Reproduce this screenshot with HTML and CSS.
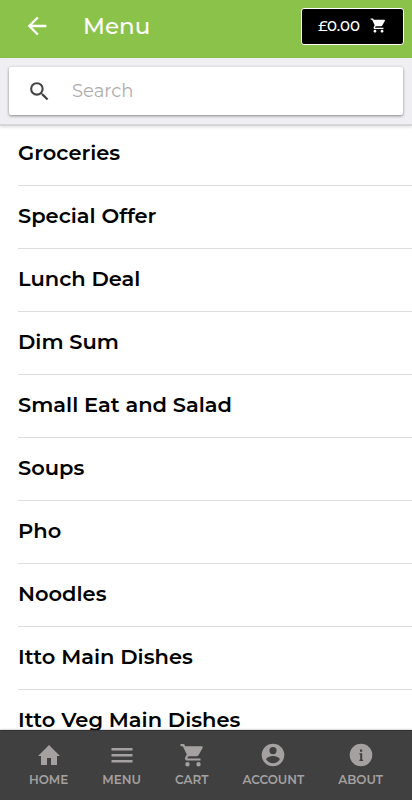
FILE: index.html
```html
<!DOCTYPE html>
<html lang="en">
<head>
    <meta charset="UTF-8">
    <meta name="viewport" content="width=device-width, initial-scale=1.0">
    <title>Menu</title>
    <link rel="stylesheet" href="styles.css">
</head>
<body>
    <header class="header">
        <button type="button" class="back" aria-label="Back">
            <svg viewBox="0 0 24 24"><path d="M20 11H7.83l5.59-5.59L12 4l-8 8 8 8 1.41-1.41L7.83 13H20v-2z"/></svg>
        </button>
        <h1 class="title">Menu</h1>
        <button type="button" class="basket">
            <span>£0.00</span>
            <svg viewBox="0 0 24 24"><path d="M7 18c-1.1 0-1.99.9-1.99 2S5.9 22 7 22s2-.9 2-2-.9-2-2-2zM1 2v2h2l3.6 7.59-1.35 2.45c-.16.28-.25.61-.25.96 0 1.1.9 2 2 2h12v-2H7.42c-.14 0-.25-.11-.25-.25l.03-.12.9-1.63h7.45c.75 0 1.41-.41 1.75-1.03l3.58-6.49A1 1 0 0 0 20 4H5.21l-.94-2H1zm16 16c-1.1 0-1.99.9-1.99 2s.89 2 1.99 2 2-.9 2-2-.9-2-2-2z"/></svg>
        </button>
    </header>

    <form class="search-bar" role="search">
        <label class="search">
            <svg viewBox="0 0 24 24"><path d="M15.5 14h-.79l-.28-.27A6.47 6.47 0 0 0 16 9.5 6.5 6.5 0 1 0 9.5 16c1.61 0 3.09-.59 4.23-1.57l.27.28v.79l5 4.99L20.49 19l-4.99-5zm-6 0a4.5 4.5 0 1 1 0-9 4.5 4.5 0 0 1 0 9z"/></svg>
            <input type="search" class="search-input" placeholder="Search" aria-label="Search">
        </label>
    </form>

    <main class="content">
        <ul class="categories">
            <li><a href="#">Groceries</a></li>
            <li><a href="#">Special Offer</a></li>
            <li><a href="#">Lunch Deal</a></li>
            <li><a href="#">Dim Sum</a></li>
            <li><a href="#">Small Eat and Salad</a></li>
            <li><a href="#">Soups</a></li>
            <li><a href="#">Pho</a></li>
            <li><a href="#">Noodles</a></li>
            <li><a href="#">Itto Main Dishes</a></li>
            <li><a href="#">Itto Veg Main Dishes</a></li>
        </ul>
    </main>

    <nav class="tabs">
        <a href="#" class="tab">
            <svg viewBox="0 0 24 24"><path d="M10 22v-7h4v7h6v-9h3L12 2 1 13h3v9z"/></svg>
            <span>HOME</span>
        </a>
        <a href="#" class="tab">
            <svg viewBox="0 0 24 24"><path d="M1.500 19.500h21V17h-21v2.500zm0-6h21V11h-21v2.500zm0-8.500v2.500h21V5h-21z"/></svg>
            <span>MENU</span>
        </a>
        <a href="#" class="tab">
            <svg viewBox="0 0 24 24"><path d="M7.500 19a2.200 2.200 0 1 0 0 4.400 2.200 2.200 0 0 0 0-4.400zM.5 1v2.200h2.300l4 8.400-1.500 2.700c-.2.300-.3.700-.3 1.100 0 1.200 1 2.200 2.200 2.200h13.300v-2.200H7.700c-.2 0-.3-.1-.3-.3l1-1.900h8.300c.8 0 1.500-.5 1.900-1.100l4-7.200c.4-.8-.1-1.700-1-1.700H5.200L4.100 1H.5zm18 18a2.200 2.200 0 1 0 0 4.400 2.200 2.200 0 0 0 0-4.400z"/></svg>
            <span>CART</span>
        </a>
        <a href="#" class="tab">
            <svg viewBox="0 0 24 24"><path fill-rule="evenodd" d="M12 .7a11.300 11.300 0 1 0 0 22.600A11.300 11.300 0 0 0 12 .7zm0 3.300a3.600 3.600 0 1 1 0 7.200A3.600 3.600 0 0 1 12 4zm0 16.200a8.200 8.200 0 0 1-6.800-3.600c0-2.200 4.500-3.500 6.800-3.500s6.800 1.300 6.800 3.500a8.200 8.200 0 0 1-6.800 3.600z"/></svg>
            <span>ACCOUNT</span>
        </a>
        <a href="#" class="tab">
            <svg viewBox="0 0 24 24"><path fill-rule="evenodd" d="M12 .7a11.300 11.300 0 1 0 0 22.600A11.300 11.300 0 0 0 12 .7zM11 6.500h2.200v2.200H11V6.500zm-.6 3.800h2.800v6.500h.9V18h-3.700v-1.200h.8v-5.300h-.8v-1.200z"/></svg>
            <span>ABOUT</span>
        </a>
    </nav>
</body>
</html>
```

FILE: styles.css
```css
* {
    box-sizing: border-box;
}

body {
    margin: 0;
    height: 100vh;
    display: flex;
    flex-direction: column;
    background-color: #fff;
    font-family: Montserrat, Inter, sans-serif;
}

button {
    font-family: inherit;
    cursor: pointer;
}

svg {
    display: block;
    fill: currentColor;
}

/* Green top bar */
.header {
    display: flex;
    align-items: center;
    flex-shrink: 0;
    height: 58px;
    padding: 0 8px 6px 23px;
    background-color: #8bc34a;
    color: #fff;
}

.back {
    padding: 0;
    border: none;
    background: none;
    color: inherit;
}

.back svg {
    width: 28px;
    height: 28px;
}

.title {
    flex: 1;
    margin: 0 0 0 32px;
    font-size: 23px;
    font-weight: 500;
    line-height: 30px;
}

.basket {
    display: flex;
    align-items: center;
    justify-content: center;
    gap: 10px;
    width: 103px;
    height: 37px;
    padding: 0 0 2px;
    border: 1px solid #fff;
    border-radius: 3px;
    background-color: #000;
    color: #fff;
    font-size: 15px;
    font-weight: 500;
}

.basket svg {
    width: 17px;
    height: 17px;
}

/* Search */
.search-bar {
    position: relative;
    z-index: 1;
    flex-shrink: 0;
    margin: 0;
    padding: 9px;
    border-bottom: 2px solid #d6d6da;
    background-color: #eeeef3;
    box-shadow: 0 1px 3px rgba(0, 0, 0, 0.15);
}

.search {
    display: flex;
    align-items: center;
    gap: 20px;
    height: 48px;
    padding: 0 18px;
    border-radius: 2px;
    background-color: #fff;
    color: #444;
    box-shadow: 0 1px 3px rgba(0, 0, 0, 0.45);
}

.search svg {
    flex-shrink: 0;
    width: 25px;
    height: 25px;
}

.search-input {
    flex: 1;
    min-width: 0;
    padding: 0;
    border: none;
    outline: none;
    background: none;
    color: #222;
    font-family: inherit;
    font-size: 18px;
}

.search-input::placeholder {
    color: #adadad;
}

/* Category list, scrolls between the search and the tabs */
.content {
    flex: 1;
    min-height: 0;
    margin-top: -3px;
    overflow: auto;
    scrollbar-width: none;
}

.categories {
    margin: 0;
    padding: 0 0 0 18px;
    list-style: none;
}

.categories a {
    display: flex;
    align-items: center;
    height: 63px;
    padding-bottom: 4px;
    border-bottom: 1px solid #dedede;
    color: #000;
    font-size: 21px;
    font-weight: 600;
    text-decoration: none;
}

/* Bottom tabs */
.tabs {
    display: flex;
    justify-content: space-between;
    flex-shrink: 0;
    height: 70px;
    padding: 12px 29px 0;
    border-top: 1px solid #333;
    background-color: #404040;
    box-shadow: 0 0 2px rgba(0, 0, 0, 0.4);
}

.tab {
    display: flex;
    flex-direction: column;
    align-items: center;
    gap: 6px;
    color: #a5a1a1;
    font-size: 12px;
    font-weight: 600;
    line-height: 14px;
    text-decoration: none;
}

.tab svg {
    width: 24px;
    height: 24px;
}
```
